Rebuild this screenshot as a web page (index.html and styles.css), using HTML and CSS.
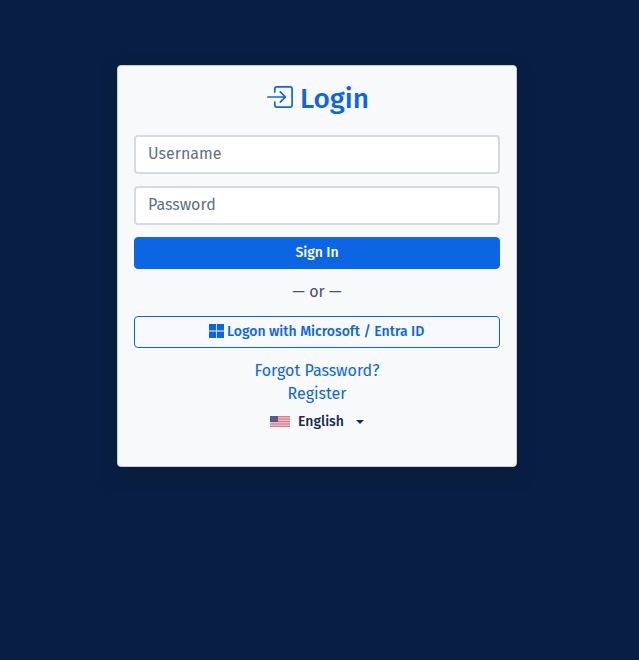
FILE: index.html
```html
<!DOCTYPE html>
<html lang="en">
<head>
<meta charset="utf-8">
<title>Login</title>
<link rel="stylesheet" href="styles.css">
</head>
<body>
<main class="card">
  <h1 class="title">
    <svg class="login-icon" viewBox="0 0 26 22" fill="none" stroke="currentColor" stroke-width="1.7" stroke-linecap="round" stroke-linejoin="round"><path d="M7.8 6V3q0-2.1 2.1-2.1H23q2.1 0 2.1 2.1v16q0 2.1-2.1 2.1H9.900q-2.100 0-2.100-2.100v-3M.9 11h17.500M13.300 5.900l5.100 5.100-5.100 5.100"/></svg>
    <span>Login</span>
  </h1>
  <form class="form">
    <input class="field" type="text" placeholder="Username" aria-label="Username">
    <input class="field" type="password" placeholder="Password" aria-label="Password">
    <button class="button primary" type="button"><span>Sign In</span></button>
    <div class="divider">— or —</div>
    <button class="button outline" type="button">
      <svg class="windows" viewBox="0 0 15 14" fill="currentColor"><path d="M0 0h7v6.600H0zM7.800 0H15v6.600H7.800zM0 7.400h7V14H0zM7.800 7.400H15V14H7.800z"/></svg>
      <span>Logon with Microsoft / Entra ID</span>
    </button>
  </form>
  <nav class="links"><a href="#">Forgot Password?</a><a href="#">Register</a></nav>
  <button class="language" type="button">
    <svg class="flag" viewBox="0 0 20 11"><path fill="#eee1e6" d="M0 0h20v11H0z"/><path stroke="#d96b7d" stroke-width=".95" d="M0 .42h20M0 2.120h20M0 3.810h20M0 5.500h20M0 7.190h20M0 8.880h20M0 10.580h20"/><path fill="#4c507f" d="M0 0h8v6H0z"/><path stroke="#a2a5bf" stroke-width=".6" stroke-dasharray=".6 1" d="M.6 1h7M1.200 2.300h6M.6 3.600h7M1.200 4.900h6"/></svg>
    <span>English</span>
    <span class="caret"></span>
  </button>
</main>
</body>
</html>
```
FILE: styles.css
```css
* { box-sizing: border-box; }
body { margin: 0; min-height: 660px; padding: 65px 0 0 117px; background: #091e44; color: #44546f; font: 16px/24px "Fira Sans", "Noto Sans", sans-serif; }
.card { width: 400px; height: 402px; padding: 16px; display: flex; flex-direction: column; border: 1px solid #c9ced5; border-radius: 4px; background: #f8f9fb; box-shadow: 0 8px 16px rgba(9, 32, 48, .6); }
.title { display: flex; justify-content: center; align-items: center; gap: 7px; height: 34px; margin: 0 0 19px; padding-left: 2px; color: #0c66e4; font-size: 28px; font-weight: 500; line-height: 34px; }
.login-icon { width: 26px; height: 22px; flex: none; margin-bottom: 4px; }
.form { display: flex; flex-direction: column; }
.field { width: 100%; height: 39px; margin: 0 0 12px; padding: 0 12px 2px; border: 2px solid #d5d9e0; border-radius: 4px; background: #fff; font: inherit; }
.field::placeholder { color: #626f86; opacity: 1; }
.button { display: flex; align-items: center; justify-content: center; gap: 3px; height: 32px; padding: 0; border: 1px solid #0c66e4; border-radius: 4px; font: 500 14px/20px "Fira Sans", "Noto Sans", sans-serif; white-space: nowrap; }
.primary { color: #fff; background: #0c66e4; }
.outline { padding-right: .6px; color: #0c66e4; background: transparent; }
.windows { width: 15px; height: 14px; flex: none; margin-bottom: 2px; }
.divider { height: 24px; margin: 11px 0 12px; text-align: center; white-space: nowrap; }
.links { display: flex; flex-direction: column; align-items: center; margin-top: 11px; line-height: 23px; }
.links a { color: #0c66e4; text-decoration: none; white-space: nowrap; }
.language { display: flex; align-items: center; align-self: center; height: 32px; padding: 2px 0 0; border: 0; background: transparent; color: #172b4d; font: 500 14px/20px "Fira Sans", "Noto Sans", sans-serif; }
.flag { width: 20px; height: 11px; margin: 0 8px 1px 0; }
.caret { margin: 0 0 0 12px; border: 4px solid transparent; border-top-color: currentColor; border-bottom: 0; }
```
